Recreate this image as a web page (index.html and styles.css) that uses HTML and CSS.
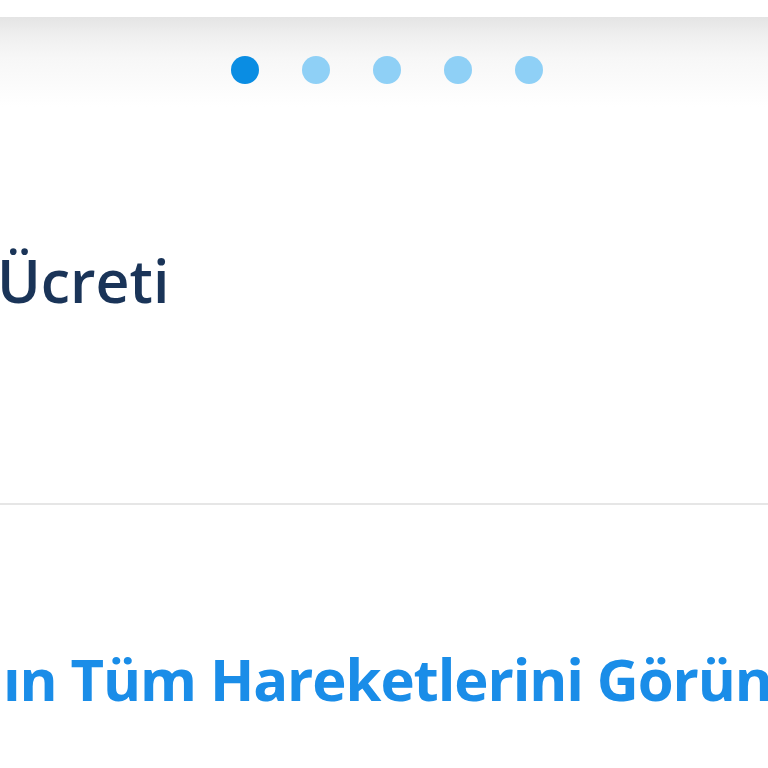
FILE: index.html
```html
<!DOCTYPE html>
<html>
<head>
  <title>Kart Detayı</title>
  <link rel="stylesheet" href="styles.css">
</head>
<body>
  <div class="pager">
    <span class="dot active"></span>
    <span class="dot"></span>
    <span class="dot"></span>
    <span class="dot"></span>
    <span class="dot"></span>
  </div>

  <div class="fee">
    <h2 class="fee-title">Ücreti</h2>
  </div>

  <div class="divider"></div>

  <div class="moves">
    <a class="moves-link" href="#">ın Tüm Hareketlerini Görüntüle</a>
  </div>
</body>
</html>
```

FILE: styles.css
```css
body {
  font-family: "Open Sans", "Noto Sans", sans-serif;
  margin: 0;
  background-color: #fff;
  overflow: hidden;
}

.pager {
  margin-top: 17px;
  height: 90px;
  padding: 39px 0 0 5px;
  box-sizing: border-box;
  display: flex;
  justify-content: center;
  align-items: flex-start;
  gap: 43px;
  background: linear-gradient(#e4e4e4 0%, #efefef 20%, #f7f7f7 45%, #fff 100%);
}

.dot {
  width: 28px;
  height: 28px;
  border-radius: 50%;
  background-color: #8fd0f6;
}

.dot.active {
  background-color: #0a8de3;
}

.fee {
  height: 396px;
  padding-top: 133px;
  box-sizing: border-box;
}

.fee-title {
  margin: 0 0 0 -3px;
  font-size: 59px;
  font-weight: 600;
  line-height: 80px;
  color: #1a3458;
  white-space: nowrap;
}

.divider {
  height: 2px;
  background-color: #e6e6e6;
}

.moves {
  padding-top: 134px;
  white-space: nowrap;
}

.moves-link {
  margin-left: 3px;
  font-size: 58px;
  font-weight: 700;
  letter-spacing: -1.1px;
  color: #1a8de8;
  text-decoration: none;
  line-height: 80px;
}
```
